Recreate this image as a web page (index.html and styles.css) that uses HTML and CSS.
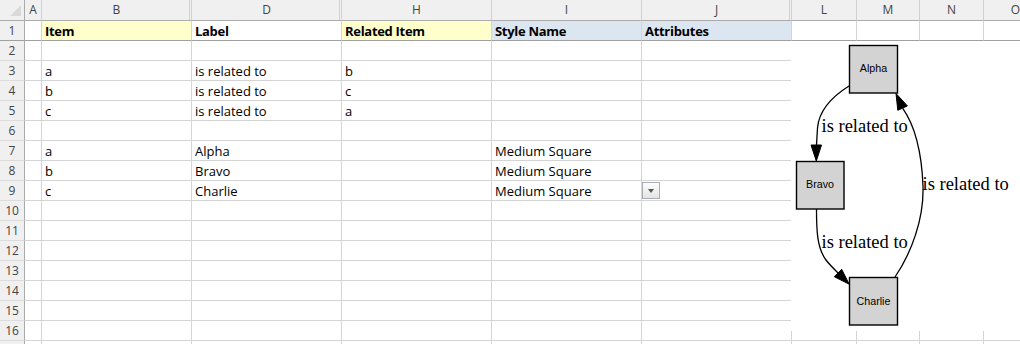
FILE: index.html
```html
<!DOCTYPE html>
<html>
<head>
<meta charset="utf-8">
<link rel="stylesheet" href="styles.css">
</head>
<body>
<div class="sheet">
  <div class="row hdr">
    <div class="corner"><svg width="24" height="20" viewBox="0 0 24 20"><polygon points="21,5 21,16 10,16" fill="#d9d9d9"/></svg></div>
    <div>A</div><div class="hid">B</div><div class="hid">D</div><div>H</div><div>I</div><div class="hid">J</div><div>L</div><div>M</div><div>N</div><div>O</div>
  </div>
  <div class="row frz">
    <div class="rn">1</div><div></div><div class="y bold">Item</div><div class="bold">Label</div><div class="y bold">Related Item</div><div class="b bold">Style Name</div><div class="b bold">Attributes</div><div></div><div></div><div></div><div></div>
  </div>
  <div class="row"><div class="rn">2</div><div></div><div></div><div></div><div></div><div></div><div></div><div></div><div></div><div></div><div></div></div>
  <div class="row"><div class="rn">3</div><div></div><div>a</div><div>is related to</div><div>b</div><div></div><div></div><div></div><div></div><div></div><div></div></div>
  <div class="row"><div class="rn">4</div><div></div><div>b</div><div>is related to</div><div>c</div><div></div><div></div><div></div><div></div><div></div><div></div></div>
  <div class="row"><div class="rn">5</div><div></div><div>c</div><div>is related to</div><div>a</div><div></div><div></div><div></div><div></div><div></div><div></div></div>
  <div class="row"><div class="rn">6</div><div></div><div></div><div></div><div></div><div></div><div></div><div></div><div></div><div></div><div></div></div>
  <div class="row"><div class="rn">7</div><div></div><div>a</div><div>Alpha</div><div></div><div>Medium Square</div><div></div><div></div><div></div><div></div><div></div></div>
  <div class="row"><div class="rn">8</div><div></div><div>b</div><div>Bravo</div><div></div><div>Medium Square</div><div></div><div></div><div></div><div></div><div></div></div>
  <div class="row"><div class="rn">9</div><div></div><div>c</div><div>Charlie</div><div></div><div>Medium Square</div><div class="ddcell"><span class="dd"></span></div><div></div><div></div><div></div><div></div></div>
  <div class="row"><div class="rn">10</div><div></div><div></div><div></div><div></div><div></div><div></div><div></div><div></div><div></div><div></div></div>
  <div class="row"><div class="rn">11</div><div></div><div></div><div></div><div></div><div></div><div></div><div></div><div></div><div></div><div></div></div>
  <div class="row"><div class="rn">12</div><div></div><div></div><div></div><div></div><div></div><div></div><div></div><div></div><div></div><div></div></div>
  <div class="row"><div class="rn">13</div><div></div><div></div><div></div><div></div><div></div><div></div><div></div><div></div><div></div><div></div></div>
  <div class="row"><div class="rn">14</div><div></div><div></div><div></div><div></div><div></div><div></div><div></div><div></div><div></div><div></div></div>
  <div class="row"><div class="rn">15</div><div></div><div></div><div></div><div></div><div></div><div></div><div></div><div></div><div></div><div></div></div>
  <div class="row"><div class="rn">16</div><div></div><div></div><div></div><div></div><div></div><div></div><div></div><div></div><div></div><div></div></div>
  <div class="row"><div class="rn"></div><div></div><div></div><div></div><div></div><div></div><div></div><div></div><div></div><div></div><div></div></div>
</div>

<div class="chart">
  <svg width="229" height="290" viewBox="791 41 229 290">
    <g fill="none" stroke="#000" stroke-width="1.3">
      <path d="M849,86 C833,96 819,110 817.5,128 L816.5,145"/>
      <path d="M816.5,209 C816.5,230 817,248 826,260 C829,264 833,268 838,273"/>
      <path d="M895,277 C912,252 924,218 923,186 C922,160 918,130 902.6,108.1"/>
    </g>
    <g fill="#000" stroke="#000" stroke-width="1">
      <polygon points="811,145 821.5,145 816.3,161"/>
      <polygon points="834.3,276.7 841.7,269.3 849.2,284.2"/>
      <polygon points="907.4,105.9 897.8,110.3 896,93.5"/>
    </g>
    <g fill="#d3d3d3" stroke="#000" stroke-width="1.4">
      <rect x="849.5" y="45.5" width="48" height="47.5"/>
      <rect x="796.5" y="161.5" width="47.5" height="47.5"/>
      <rect x="849.5" y="277.5" width="48" height="47.5"/>
    </g>
    <g class="nlabel" text-anchor="middle">
      <text x="873.5" y="72">Alpha</text>
      <text x="820" y="188">Bravo</text>
      <text x="873.5" y="304.5">Charlie</text>
    </g>
    <g class="elabel">
      <text x="821.5" y="132">is related to</text>
      <text x="922.5" y="190">is related to</text>
      <text x="821.5" y="247.5">is related to</text>
    </g>
  </svg>
</div>
</body>
</html>
```

FILE: styles.css
```css
* { box-sizing: border-box; margin: 0; padding: 0; }
html, body { width: 1020px; height: 344px; overflow: hidden; background: #fff; }
body { font-family: "Open Sans", sans-serif; color: #000; position: relative; }

.sheet { display: flex; flex-direction: column; }

.row {
  display: grid;
  grid-template-columns: 25px 17px 150px 150px 150px 150px 150px 65px 63px 64px 64px;
  height: 20px;
}
.row > div {
  border-right: 1px solid #d4d4d4;
  border-bottom: 1px solid #d4d4d4;
  font-size: 13px;
  line-height: 18px;
  padding: 1px 0 0 3px;
  white-space: nowrap;
}

.row.hdr { height: 21px; }
.row.hdr > div {
  background: #f0f0f0;
  border-bottom: 1px solid #ababab;
  border-right-color: #d2d2d2;
  color: #444;
  font-size: 12px;
  line-height: 20px;
  text-align: center;
  padding: 0;
}
.row.hdr > .corner { border-right-color: #ababab; }
.row.hdr > .corner svg { display: block; }
.row.hdr > .hid { box-shadow: inset -1px 0 0 #f0f0f0, inset -2px 0 0 #d2d2d2; }

.row > .rn {
  background: #f0f0f0;
  border-right: 1px solid #ababab;
  border-bottom-color: #dcdcdc;
  color: #444;
  font-size: 12px;
  line-height: 19px;
  text-align: center;
  padding: 0;
}
.row.frz > div { border-bottom-color: #a0a0a0; }

.y { background: #ffffcc; }
.b { background: #dce6f1; }
.bold { font-weight: 700; letter-spacing: -0.3px; }

.ddcell { position: relative; }
.dd {
  position: absolute;
  left: 0;
  top: 1px;
  width: 18px;
  height: 17px;
  border: 1px solid #a9aeb6;
  background: linear-gradient(#fdfdfd, #e4e4e4);
}
.dd::after {
  content: "";
  position: absolute;
  left: 5px;
  top: 6px;
  border-left: 3px solid transparent;
  border-right: 3px solid transparent;
  border-top: 4px solid #555;
}

.chart {
  position: absolute;
  left: 791px;
  top: 41px;
  width: 229px;
  height: 290px;
  background: #fff;
}
.chart svg { display: block; }
.nlabel { font-family: "Liberation Sans", Arial, sans-serif; font-size: 10.7px; fill: #000; }
.elabel { font-family: "Liberation Serif", "Times New Roman", serif; font-size: 18.5px; fill: #000; }
```
